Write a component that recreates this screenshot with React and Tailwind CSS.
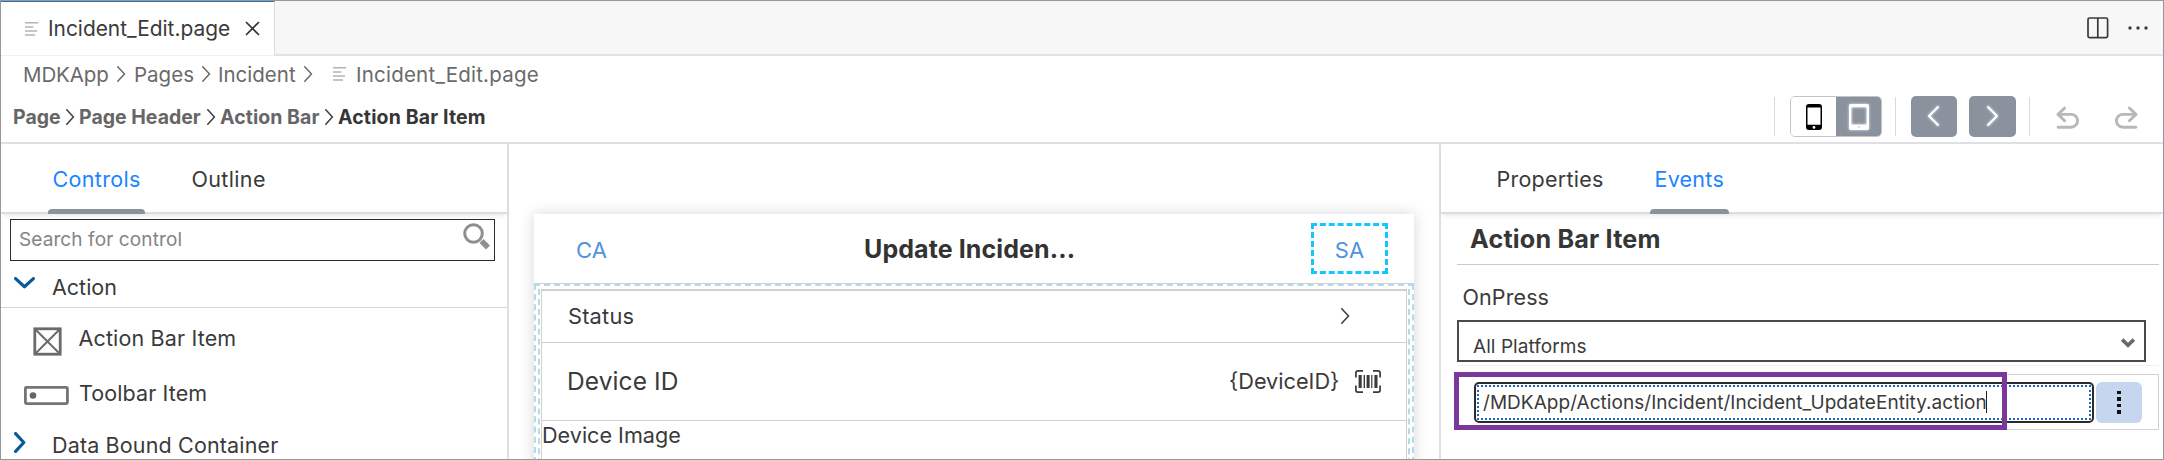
import React from "react";

function Chevron({ w, h, dir = "right", className, sw = 1.6 }) {
  const pts =
    dir === "right"
      ? `${sw / 2},${sw / 2} ${w - sw},${h / 2} ${sw / 2},${h - sw / 2}`
      : dir === "left"
        ? `${w - sw / 2},${sw / 2} ${sw},${h / 2} ${w - sw / 2},${h - sw / 2}`
        : `${sw / 2},${sw / 2} ${w / 2},${h - sw} ${w - sw / 2},${sw / 2}`;
  return (
    <svg width={w} height={h} viewBox={`0 0 ${w} ${h}`} className={className} fill="none" stroke="currentColor" strokeWidth={sw} strokeLinecap="round" strokeLinejoin="round">
      <polyline points={pts} />
    </svg>
  );
}

function FileIcon({ className }) {
  return (
    <svg width="14" height="14" viewBox="0 0 14 14" className={className} stroke="#b4b4b4" strokeWidth="1.5">
      <path d="M0 .8H13.3M0 5H8.3M0 9H12M0 13H10" />
    </svg>
  );
}

function TabBar() {
  return (
    <div className="flex h-[55px] shrink-0 bg-[#f7f7f7]">
      <div className="flex h-full w-[274px] shrink-0 items-center border-t border-r border-b border-t-[#2f72b8] border-r-[#dcdcdf] border-b-[#f0f0f0] bg-white pt-[2px] text-[#3a3a3a]">
        <FileIcon className="-mt-[2px] ml-6 shrink-0" />
        <span className="ml-[9px] w-[186px] text-[20.9px] tracking-[-0.01px]">Incident_Edit.page</span>
        <svg width="15" height="15" viewBox="0 0 15 15" className="-mt-[2px] ml-[11px]" stroke="#333" strokeWidth="1.7">
          <path d="M1 1L14 14M14 1L1 14" />
        </svg>
      </div>
      <div className="flex flex-1 items-center justify-end border-b-2 border-[#e3e3e6] pr-[15px]">
        <svg width="22" height="22" viewBox="0 0 22 22" fill="none" stroke="#3a3a3a" strokeWidth="1.7">
          <rect x="1" y="1" width="19.6" height="19.6" rx="1.5" />
          <path d="M10.8 1V20.6" />
        </svg>
        <svg width="20" height="4" viewBox="0 0 20 4" className="ml-[19px]" fill="#3a3a3a">
          <circle cx="2" cy="2" r="1.7" />
          <circle cx="10" cy="2" r="1.7" />
          <circle cx="18" cy="2" r="1.7" />
        </svg>
      </div>
    </div>
  );
}

function FilePath() {
  return (
    <div className="flex h-[37px] shrink-0 items-center pl-[22px] pt-px text-[20.5px] text-[#6a6a6a]">
      <span className="w-[94px] tracking-[-0.1px]">MDKApp</span>
      <Chevron w={9} h={16} sw={1.5} className="-mt-[2px]" />
      <span className="ml-[8px] w-[68px]">Pages</span>
      <Chevron w={9} h={16} sw={1.5} className="-mt-[2px]" />
      <span className="ml-[7px] w-[86px]">Incident</span>
      <Chevron w={9} h={16} sw={1.5} className="-mt-[2px]" />
      <FileIcon className="-mt-[2px] ml-[20px]" />
      <span className="ml-[9px] tracking-[0.22px]">Incident_Edit.page</span>
    </div>
  );
}

function Toolbar() {
  return (
    <div className="flex h-[51px] shrink-0 items-center border-b-2 border-[#e0dfe6] text-[19.5px] font-bold text-[#666]">
      <div className="flex flex-1 items-center pl-[12px]">
        <span className="w-[53px]">Page</span>
        <Chevron w={9} h={16} sw={1.6} className="-mt-px text-[#444]" />
        <span className="ml-[4px] w-[128px]">Page Header</span>
        <Chevron w={9} h={16} sw={1.6} className="-mt-px text-[#444]" />
        <span className="ml-[4px] w-[105px] tracking-[0.05px]">Action Bar</span>
        <Chevron w={9} h={16} sw={1.6} className="-mt-px text-[#444]" />
        <span className="ml-[4px] tracking-[0.14px] text-[#363636]">Action Bar Item</span>
      </div>
      <div className="mt-[-2px] flex items-center pr-[25px]">
        <div className="h-[39px] w-px bg-[#d9d9df]" />
        <div className="ml-[15px] flex h-[41px] w-[92px] overflow-hidden rounded-[5px] border border-[#c4c4c4]">
          <div className="flex w-[45px] items-center justify-center bg-white">
            <svg width="16" height="26" viewBox="0 0 16 26">
              <path fillRule="evenodd" d="M3 0H13Q16 0 16 3V23Q16 26 13 26H3Q0 26 0 23V3Q0 0 3 0ZM1.5 3.4V20.8H14.5V3.4ZM8 22A1.4 1.4 0 1 0 8 24.8A1.4 1.4 0 1 0 8 22Z" />
            </svg>
          </div>
          <div className="-my-px -mr-px flex flex-1 items-center justify-center bg-[#8a929e]">
            <svg width="20" height="26" viewBox="0 0 20 26" fill="#fff" className="overflow-visible drop-shadow-[0_0_1.5px_rgba(255,255,255,0.8)]">
              <path fillRule="evenodd" d="M1.5 0H18.5Q20 0 20 1.5V24.5Q20 26 18.5 26H1.5Q0 26 0 24.5V1.5Q0 0 1.5 0ZM2.4 3.2V20.6H17.6V3.2ZM10 22.1A1 1 0 1 0 10 24.1A1 1 0 1 0 10 22.1Z" />
            </svg>
          </div>
        </div>
        <div className="ml-[13px] h-[39px] w-px bg-[#d9d9df]" />
        <div className="ml-[15px] flex h-[41px] w-[46px] items-center justify-center rounded-[5px] bg-[#8a929e] text-white">
          <Chevron w={12} h={20} sw={2} dir="left" className="-mt-px -ml-[2px] overflow-visible drop-shadow-[0_0_1.5px_rgba(255,255,255,0.8)]" />
        </div>
        <div className="ml-[12px] flex h-[41px] w-[47px] items-center justify-center rounded-[5px] bg-[#8a929e] text-white">
          <Chevron w={12} h={20} sw={2} className="-mt-px ml-[1px] overflow-visible drop-shadow-[0_0_1.5px_rgba(255,255,255,0.8)]" />
        </div>
        <div className="ml-[13px] h-[39px] w-px bg-[#d9d9df]" />
        <svg width="24" height="24" viewBox="0 0 24 24" className="ml-[26px] mt-[2px]" fill="none" stroke="#b8b8b8" strokeWidth="2.9" strokeLinecap="round" strokeLinejoin="round">
          <path d="M8.6 2L2 8.4L8.6 14.8M2.5 8.4H15.2A6.4 6.4 0 0 1 15.2 21.2H2.2" />
        </svg>
        <svg width="24" height="24" viewBox="0 0 24 24" className="ml-[34px] mt-[2px]" fill="none" stroke="#b8b8b8" strokeWidth="2.9" strokeLinecap="round" strokeLinejoin="round">
          <path d="M15.4 2L22 8.4L15.4 14.8M21.5 8.4H8.8A6.4 6.4 0 0 0 8.8 21.2H21.8" />
        </svg>
      </div>
    </div>
  );
}

function ControlsPanel() {
  return (
    <div className="flex w-[508px] shrink-0 flex-col border-r-2 border-[#e0dfe6] text-[21.5px]">
      <div className="flex h-[70px] shrink-0 border-b-2 border-[#dddddf] pl-[47px] tracking-[0.35px] shadow-[0_3px_5px_-2px_rgba(0,0,0,0.12)]">
        <div className="flex w-[97px] flex-col text-[#1b84ff]">
          <div className="flex h-[65px] items-center pt-[7px] pl-[4.5px]">Controls</div>
          <div className="z-10 -mb-[2px] h-[5px] shrink-0 rounded-t-[4px] bg-[#8a929e]" />
        </div>
        <div className="flex h-[65px] items-center pt-[7px] pl-[46.5px]">Outline</div>
      </div>
      <div className="mt-[5px] ml-[9px] flex h-[42px] w-[485px] shrink-0 items-center border-[1.5px] border-[#2c2c2c] bg-white pl-[8px]">
        <span className="-mt-[2px] w-[444px] text-[19px] tracking-[0.1px] text-[#848484]">Search for control</span>
        <svg width="28" height="30" viewBox="0 0 28 30" className="-mt-[8px]" fill="none" stroke="#8f8f8f">
          <circle cx="10.5" cy="12.5" r="8.8" strokeWidth="3" />
          <path d="M18.5 20L25 26.5" strokeWidth="5.5" />
        </svg>
      </div>
      <div className="flex h-[47px] shrink-0 items-center border-b border-[#d3d5da] pl-[13px]">
        <Chevron w={21} h={13} sw={3.2} dir="down" className="-mt-[2px] text-[#0a5a96]" />
        <span className="ml-[17px] pt-[7px]">Action</span>
      </div>
      <div className="flex h-[63px] shrink-0 items-center pl-[32px]">
        <svg width="29" height="29" viewBox="0 0 29 29" className="mt-[4px]" fill="none" stroke="#6a6a6a" strokeWidth="2.8">
          <rect x="1.8" y="1.8" width="25.4" height="25.4" />
          <path d="M2 2L27 27M27 2L2 27" strokeWidth="2" />
        </svg>
        <span className="-mt-px ml-[16.5px] tracking-[0.15px]">Action Bar Item</span>
      </div>
      <div className="flex h-[46px] shrink-0 items-center pl-[23px]">
        <svg width="45" height="19" viewBox="0 0 45 19" className="mt-[3px]" fill="none" stroke="#757575" strokeWidth="2.8">
          <rect x="1.4" y="1.4" width="42" height="16.2" rx="1" />
          <circle cx="9" cy="9.5" r="3.3" fill="#666" stroke="none" />
        </svg>
        <span className="-mt-px ml-[10px] tracking-[0.1px]">Toolbar Item</span>
      </div>
      <div className="flex h-[56px] shrink-0 items-center pl-[13px]">
        <Chevron w={13} h={21} sw={3.2} className="-mt-[6px] text-[#0a5a96]" />
        <span className="ml-[25px] pt-px tracking-[0.15px]">Data Bound Container</span>
      </div>
    </div>
  );
}

function Barcode() {
  return (
    <svg width="26" height="23" viewBox="0 0 26 23" className="ml-[15px]">
      <path d="M.9 7.5V3Q.9.9 3 .9H8M18 .9H23Q25.1.9 25.1 3V7.5M25.1 15.5V20Q25.1 22.1 23 22.1H18M8 22.1H3Q.9 22.1.9 20V15.5" fill="none" stroke="#3a3a3a" strokeWidth="1.7" />
      <path d="M3.6 5H6.7V18H3.6ZM8.6 5H10V18H8.6ZM11.6 5H14.6V18H11.6ZM16.2 5H17.4V18H16.2ZM19.4 5H22.5V18H19.4Z" fill="#3a3a3a" />
    </svg>
  );
}

function DeviceCanvas() {
  return (
    <div className="flex w-[930px] shrink-0 justify-start overflow-hidden pt-[70px] pl-[25px]">
      <div className="flex h-[300px] w-[880px] flex-col bg-white shadow-[0_0_14px_rgba(0,0,0,0.16)]">
        <div className="flex h-[70px] shrink-0 items-center border-b border-[#d0d0d0]">
          <span className="w-[330px] pt-[2px] pl-[42px] text-[22px] tracking-[0.2px] text-[#4f93dc]">CA</span>
          <span className="w-[447px] pt-[2px] text-[25px] font-bold tracking-[0.1px] text-[#333]">Update Inciden...</span>
          <div className="-mt-px flex h-[51px] w-[77px] items-center justify-center border-[3px] border-dashed border-[#12c8fb] text-[22px] text-[#4f93dc]">
            <span className="pt-[4px]">SA</span>
          </div>
        </div>
        <div className="flex-1 border-x-2 border-t-2 border-dashed border-[#b5dbe8] px-[2px] pt-[2.5px]">
          <div className="h-full border-x-2 border-dashed border-[#b5dbe8] px-px">
            <div className="flex h-full flex-col border-x border-t-2 border-[#d0d0d0] text-[21.8px]">
              <div className="flex h-[52px] shrink-0 items-center justify-between border-b border-[#cfcfcf] pl-[26px] pr-[56px]">
                <span className="pt-[2px] tracking-[0.2px]">Status</span>
                <Chevron w={9} h={16} sw={1.5} className="-mt-px" />
              </div>
              <div className="flex h-[78px] shrink-0 items-center border-b border-[#cfcfcf] pl-[25px]">
                <span className="w-[662px] pt-px text-[24.5px] tracking-[0.1px]">Device ID</span>
                <span className="w-[111px] pt-px text-[21.7px]">{"{DeviceID}"}</span>
                <Barcode />
              </div>
              <span className="text-[21.6px] leading-[29px]">Device Image</span>
            </div>
          </div>
        </div>
      </div>
    </div>
  );
}

function EventsPanel() {
  return (
    <div className="flex flex-1 flex-col border-l-2 border-[#e0dfe6] text-[21.5px]">
      <div className="flex h-[70px] shrink-0 border-b-2 border-[#dddddf] pl-[55.5px] tracking-[0.25px] shadow-[0_3px_5px_-2px_rgba(0,0,0,0.12)]">
        <div className="flex h-[65px] w-[153px] items-center pt-[7px]">Properties</div>
        <div className="flex w-[79px] flex-col text-[#1b84ff]">
          <div className="flex h-[65px] items-center pt-[7px] pl-[5px]">Events</div>
          <div className="z-10 -mb-[2px] h-[5px] shrink-0 rounded-t-[4px] bg-[#8a929e]" />
        </div>
      </div>
      <div className="mr-[4px] ml-[16px] flex h-[51px] shrink-0 items-center border-b border-[#c9c9c9] pt-[2px] pl-[13px] text-[25.2px] font-bold tracking-[0.17px] text-[#363636]">Action Bar Item</div>
      <div className="flex h-[55px] shrink-0 items-center pt-[11px] pl-[21.5px] tracking-[0.1px]">OnPress</div>
      <div className="ml-[16px] flex h-[42px] w-[689px] shrink-0 items-center justify-between border-2 border-[#4a4a4a] pt-[10px] pr-[9px] pl-[14px] text-[19px]">
        <span className="tracking-[0.06px]">All Platforms</span>
        <svg width="14" height="10" viewBox="0 0 14 10" className="-mt-[7px]" fill="none" stroke="#6a6a6a" strokeWidth="3.6">
          <path d="M1.2 1.6L7 7.2L12.8 1.6" />
        </svg>
      </div>
      <div className="mt-[3px] mr-[4px] ml-[16px] h-px shrink-0 bg-[#f1f1f1]" />
      <div className="relative mt-[8px] mr-[4px] ml-[16px] flex h-[56px] shrink-0 items-center border border-[#d2d2d2] pl-[16px]">
        <div className="h-[41px] w-[620px] rounded-[5px] border-2 border-[#2b2b2b] p-px">
          <div className="flex h-full items-center border-2 border-dotted border-[#1c68c4] pl-[4px] text-[19px] tracking-[0.04px]">
            <span>/MDKApp/Actions/Incident/Incident_UpdateEntity.action</span>
            <div className="-ml-px h-[22px] w-[1.5px] bg-[#222]" />
          </div>
        </div>
        <div className="ml-[2px] flex h-[41px] w-[46px] flex-col items-center justify-center gap-[3px] rounded-[6px] bg-[#c5d6ee]">
          <div className="h-[3.5px] w-[4px] bg-[#111]" />
          <div className="h-[3.5px] w-[4px] bg-[#111]" />
          <div className="h-[3.5px] w-[4px] bg-[#111]" />
          <div className="h-[3.5px] w-[4px] bg-[#111]" />
        </div>
        <div className="absolute top-[-3px] left-[-4px] h-[58px] w-[553px] border-5 border-[#7a389c]" />
      </div>
    </div>
  );
}

export default function App() {
  return (
    <div className="flex h-[460px] w-[2164px] flex-col overflow-hidden border border-[#989898] bg-white font-['Inter',sans-serif] leading-none whitespace-nowrap text-[#3a3a3a]">
      <TabBar />
      <FilePath />
      <Toolbar />
      <div className="flex min-h-0 flex-1 overflow-hidden">
        <ControlsPanel />
        <DeviceCanvas />
        <EventsPanel />
      </div>
    </div>
  );
}
